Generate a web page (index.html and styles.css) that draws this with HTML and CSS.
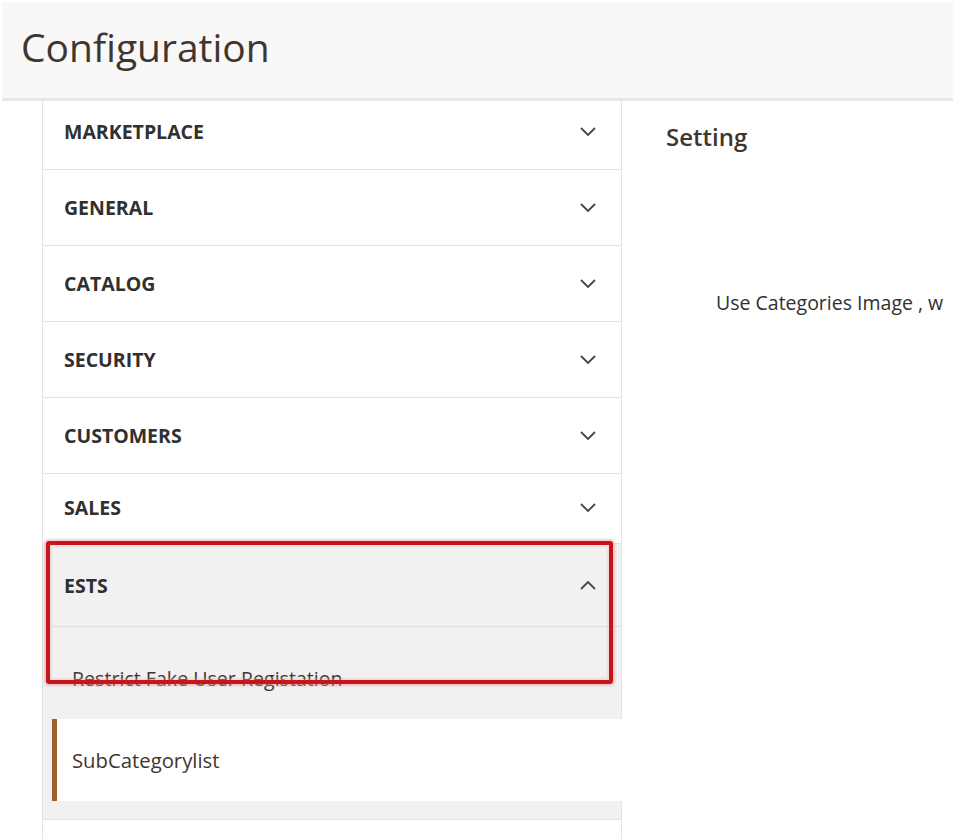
FILE: index.html
```html
<!DOCTYPE html>
<html lang="en">
<head>
<meta charset="utf-8">
<title>Configuration</title>
<link rel="stylesheet" href="styles.css">
</head>
<body>
<div class="page">
  <header class="page-header">
    <h1 class="page-title">Configuration</h1>
  </header>
  <div class="layout">
    <nav class="sidebar">
      <div class="nav-block">
        <div class="nav-title nav-title--clipped"><span>MARKETPLACE</span><svg class="chev" viewBox="0 0 16 9"><path d="M1 1l7 7 7-7"/></svg></div>
      </div>
      <div class="nav-block">
        <div class="nav-title"><span>GENERAL</span><svg class="chev" viewBox="0 0 16 9"><path d="M1 1l7 7 7-7"/></svg></div>
      </div>
      <div class="nav-block">
        <div class="nav-title"><span>CATALOG</span><svg class="chev" viewBox="0 0 16 9"><path d="M1 1l7 7 7-7"/></svg></div>
      </div>
      <div class="nav-block">
        <div class="nav-title"><span>SECURITY</span><svg class="chev" viewBox="0 0 16 9"><path d="M1 1l7 7 7-7"/></svg></div>
      </div>
      <div class="nav-block">
        <div class="nav-title"><span>CUSTOMERS</span><svg class="chev" viewBox="0 0 16 9"><path d="M1 1l7 7 7-7"/></svg></div>
      </div>
      <div class="nav-block">
        <div class="nav-title nav-title--short"><span>SALES</span><svg class="chev" viewBox="0 0 16 9"><path d="M1 1l7 7 7-7"/></svg></div>
      </div>
      <div class="nav-block nav-block--open">
        <div class="nav-title nav-title--open"><span>ESTS</span><svg class="chev" viewBox="0 0 16 9"><path d="M1 8l7-7 7 7"/></svg></div>
        <ul class="nav-items">
          <li class="nav-item">Restrict Fake User Registation</li>
          <li class="nav-item nav-item--active">SubCategorylist</li>
        </ul>
      </div>
      <div class="nav-block nav-block--next"></div>
    </nav>
    <main class="content">
      <h2 class="section-title">Setting</h2>
      <p class="field-label">Use Categories Image , w</p>
    </main>
  </div>
  <div class="highlight"></div>
</div>
</body>
</html>
```
FILE: styles.css
```css
html, body {
  margin: 0;
  padding: 0;
  background: #ffffff;
}
body {
  font-family: "Open Sans", "Liberation Sans", sans-serif;
  color: #41362f;
  overflow: hidden;
  width: 953px;
  height: 839px;
}
.page {
  position: relative;
  padding: 2px 0 0 2px;
  height: 837px;
  box-sizing: border-box;
}
.page-header {
  background: #f8f8f8;
  height: 99px;
  box-sizing: border-box;
  border-bottom: 3px solid #e6e6e6;
  display: flex;
  align-items: center;
  padding-left: 19px;
}
.page-title {
  margin: 0 0 8px 0;
  font-size: 39px;
  font-weight: 400;
  color: #41362f;
}
.layout {
  display: flex;
  align-items: stretch;
  height: 738px;
}
.sidebar {
  margin-left: 40px;
  width: 580px;
  box-sizing: border-box;
  border-left: 1px solid #e3e3e3;
  border-right: 1px solid #e3e3e3;
  display: flex;
  flex-direction: column;
  flex-shrink: 0;
}
.nav-title {
  height: 76px;
  box-sizing: border-box;
  border-bottom: 1px solid #e3e3e3;
  display: flex;
  align-items: center;
  justify-content: space-between;
  padding: 0 25px 0 21px;
  font-size: 19.5px;
  font-weight: 700;
  color: #303030;
}
.nav-title--clipped {
  height: 69px;
  padding-bottom: 8px;
}
.nav-title--short {
  height: 70px;
  padding-bottom: 2px;
}
.nav-title--open {
  border-bottom: none;
  height: 82px;
}
.chev {
  width: 16px;
  height: 9px;
  fill: none;
  stroke: #4a4542;
  stroke-width: 1.8;
}
.nav-block--open {
  background: #f1f1f1;
}
.nav-items {
  list-style: none;
  margin: 0 0 0 9px;
  padding: 10px 0 18px 0;
  border-top: 1px solid #e0e0e0;
}
.nav-item {
  height: 82px;
  box-sizing: border-box;
  display: flex;
  align-items: center;
  border-left: 5px solid transparent;
  padding-left: 15px;
  font-size: 19.6px;
  color: #41362f;
}
.nav-item--active {
  background: #ffffff;
  border-left-color: #9c612c;
  margin-right: -1px;
  font-size: 20.3px;
}
.nav-block--next {
  flex: 1;
  border-top: 1px solid #e3e3e3;
}
.content {
  flex: 1;
  padding: 19px 0 0 44px;
  white-space: nowrap;
  overflow: hidden;
}
.section-title {
  margin: 0;
  font-size: 24px;
  font-weight: 600;
  color: #41362f;
}
.field-label {
  margin: 136px 0 0 50px;
  font-size: 19.5px;
  color: #303030;
}
.highlight {
  position: absolute;
  left: 46px;
  top: 541px;
  width: 567px;
  height: 143px;
  box-sizing: border-box;
  border: 4px solid #c4161c;
  border-radius: 3px;
  box-shadow: 0 0 2px 2px rgba(240, 140, 140, 0.45), inset 0 0 2px 2px rgba(250, 170, 170, 0.35);
}
```
